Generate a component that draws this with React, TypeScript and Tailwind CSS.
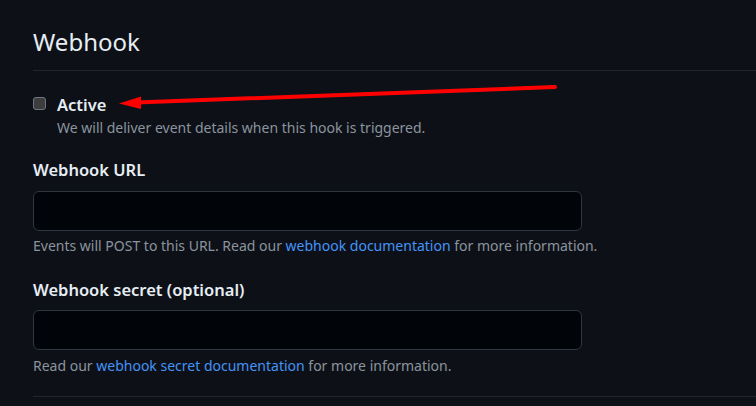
export default function App() {
  return (
    <div
      className="relative min-h-[406px] w-[756px] overflow-hidden bg-[#0d1117] text-[#e6edf3]"
      style={{ fontFamily: '"Noto Sans", "Open Sans", sans-serif' }}
    >
      <div className="pl-[33px] pt-[25px]">
        <h2 className="border-b border-[#21262d] pb-[11px] text-[24px] font-normal leading-[34px] text-[#e6edf3]">
          Webhook
        </h2>

        <div className="mt-[24px] flex items-start gap-[11px]">
          <div className="mt-[2px] h-[13px] w-[13px] rounded-[3px] border border-[#6e7681] bg-[#3d3d3d]" />
          <div>
            <div className="text-[16.5px] font-semibold leading-[20px]">Active</div>
            <div className="mt-[3px] text-[14px] leading-[20px] text-[#8b949e]">
              We will deliver event details when this hook is triggered.
            </div>
          </div>
        </div>

        <div className="mt-[22px] text-[16.5px] font-semibold leading-[20px]">Webhook URL</div>
        <div className="mt-[11px] h-[40px] w-[549px] rounded-[6px] border border-[#30363d] bg-[#010409]" />
        <div className="mt-[5px] text-[14px] leading-[20px] text-[#8b949e]">
          Events will POST to this URL. Read our{" "}
          <a className="text-[#4493f8]">webhook documentation</a> for more information.
        </div>

        <div className="mt-[24px] text-[16.5px] font-semibold leading-[20px]">
          Webhook secret (optional)
        </div>
        <div className="mt-[10px] h-[40px] w-[549px] rounded-[6px] border border-[#30363d] bg-[#010409]" />
        <div className="mt-[6px] text-[14px] leading-[20px] text-[#8b949e]">
          Read our <a className="text-[#4493f8]">webhook secret documentation</a> for more
          information.
        </div>

        <div className="mt-[20px] border-b border-[#21262d]" />
      </div>

      <svg className="pointer-events-none absolute left-0 top-0" width="756" height="406">
        <line x1="555" y1="87" x2="136" y2="102.5" stroke="#ff0000" strokeWidth="4" strokeLinecap="round" />
        <polygon points="119,103.5 141,96.5 141,109" fill="#ff0000" />
      </svg>
    </div>
  );
}
